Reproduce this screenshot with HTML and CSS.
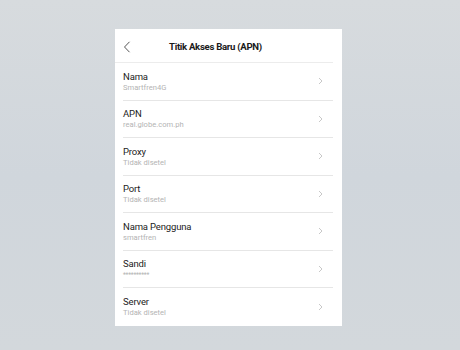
FILE: index.html
```html
<!DOCTYPE html>
<html lang="id">
<head>
<meta charset="utf-8">
<title>Titik Akses Baru (APN)</title>
<link rel="stylesheet" href="styles.css">
</head>
<body>
<div class="card">
  <div class="header">
    <svg class="back" width="8" height="12" viewBox="0 0 8 12"><path d="M6.5 0.8 L1.5 6 L6.5 11.2" fill="none" stroke="#555" stroke-width="1"/></svg>
    <div class="title">Titik Akses Baru (APN)</div>
  </div>
  <div class="list">
    <div class="row"><div class="text"><div class="label">Nama</div><div class="sub">Smartfren4G</div></div><svg class="chev" width="5" height="8" viewBox="0 0 5 8"><path d="M1 1 L4 4 L1 7" fill="none" stroke="#c8c8c8" stroke-width="1"/></svg></div>
    <div class="row"><div class="text"><div class="label">APN</div><div class="sub">real.globe.com.ph</div></div><svg class="chev" width="5" height="8" viewBox="0 0 5 8"><path d="M1 1 L4 4 L1 7" fill="none" stroke="#c8c8c8" stroke-width="1"/></svg></div>
    <div class="row"><div class="text"><div class="label">Proxy</div><div class="sub">Tidak disetel</div></div><svg class="chev" width="5" height="8" viewBox="0 0 5 8"><path d="M1 1 L4 4 L1 7" fill="none" stroke="#c8c8c8" stroke-width="1"/></svg></div>
    <div class="row"><div class="text"><div class="label">Port</div><div class="sub">Tidak disetel</div></div><svg class="chev" width="5" height="8" viewBox="0 0 5 8"><path d="M1 1 L4 4 L1 7" fill="none" stroke="#c8c8c8" stroke-width="1"/></svg></div>
    <div class="row"><div class="text"><div class="label">Nama Pengguna</div><div class="sub">smartfren</div></div><svg class="chev" width="5" height="8" viewBox="0 0 5 8"><path d="M1 1 L4 4 L1 7" fill="none" stroke="#c8c8c8" stroke-width="1"/></svg></div>
    <div class="row"><div class="text"><div class="label">Sandi</div><div class="sub stars">**********</div></div><svg class="chev" width="5" height="8" viewBox="0 0 5 8"><path d="M1 1 L4 4 L1 7" fill="none" stroke="#c8c8c8" stroke-width="1"/></svg></div>
    <div class="row last"><div class="text"><div class="label">Server</div><div class="sub">Tidak disetel</div></div><svg class="chev" width="5" height="8" viewBox="0 0 5 8"><path d="M1 1 L4 4 L1 7" fill="none" stroke="#c8c8c8" stroke-width="1"/></svg></div>
  </div>
</div>
</body>
</html>
```
FILE: styles.css
```css
html, body {
  margin: 0;
  padding: 0;
}
body {
  width: 460px;
  height: 350px;
  background: linear-gradient(180deg, #d7dbde 0%, #d0d6dc 50%, #d3d8dc 100%);
  font-family: Roboto, "Liberation Sans", sans-serif;
  overflow: hidden;
}
.card {
  margin: 29px 0 0 115px;
  width: 227px;
  height: 297px;
  background: #ffffff;
  box-sizing: border-box;
}
.header {
  height: 34px;
  display: flex;
  align-items: center;
  margin-right: 9px;
  border-bottom: 1px solid #ececec;
  box-sizing: border-box;
}
.back {
  flex: none;
  margin-left: 8px;
  margin-top: 2px;
}
.title {
  margin-left: 38px;
  margin-top: 2px;
  font-size: 9.6px;
  font-weight: 700;
  color: #1a1a1a;
  letter-spacing: -0.3px;
  white-space: nowrap;
}
.list {
  margin-left: 8px;
  margin-right: 9px;
}
.row {
  height: 37.5px;
  box-sizing: border-box;
  border-bottom: 1px solid #e6e6e6;
  display: flex;
  align-items: center;
  justify-content: space-between;
}
.row.last {
  border-bottom: none;
}
.text {
  padding-top: 1px;
}
.label {
  font-size: 9.5px;
  line-height: 12px;
  color: #1c1c1c;
  letter-spacing: -0.15px;
}
.sub {
  font-size: 7.6px;
  line-height: 10px;
  color: #b4b4b4;
}
.stars {
  font-size: 6.5px;
  letter-spacing: -0.2px;
}
.chev {
  flex: none;
  margin-right: 10px;
}
```
